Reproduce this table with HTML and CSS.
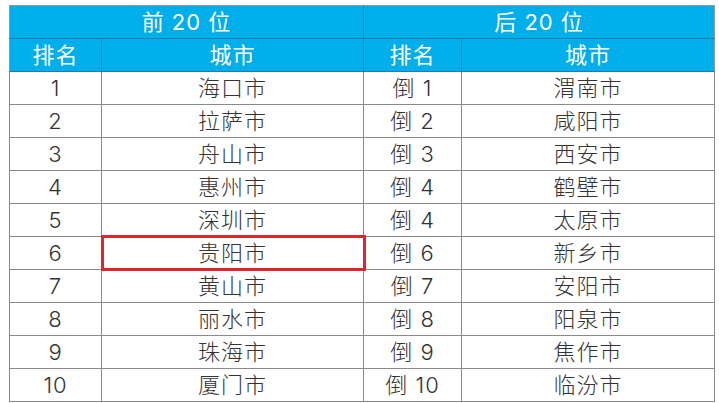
FILE: index.html
```html
<!DOCTYPE html>
<html lang="zh">
<head>
<meta charset="utf-8">
<title>城市排名</title>
<link rel="stylesheet" href="styles.css">
</head>
<body>
<table class="rank">
  <colgroup>
    <col class="c1"><col class="c2"><col class="c3"><col class="c4">
  </colgroup>
  <thead>
    <tr class="h1"><th colspan="2">前 20 位</th><th colspan="2">后 20 位</th></tr>
    <tr class="h2"><th>排名</th><th>城市</th><th>排名</th><th>城市</th></tr>
  </thead>
  <tbody>
    <tr><td>1</td><td>海口市</td><td>倒 1</td><td>渭南市</td></tr>
    <tr><td>2</td><td>拉萨市</td><td>倒 2</td><td>咸阳市</td></tr>
    <tr><td>3</td><td>舟山市</td><td>倒 3</td><td>西安市</td></tr>
    <tr><td>4</td><td>惠州市</td><td>倒 4</td><td>鹤壁市</td></tr>
    <tr><td>5</td><td>深圳市</td><td>倒 4</td><td>太原市</td></tr>
    <tr><td>6</td><td class="hl">贵阳市</td><td>倒 6</td><td>新乡市</td></tr>
    <tr><td>7</td><td>黄山市</td><td>倒 7</td><td>安阳市</td></tr>
    <tr><td>8</td><td>丽水市</td><td>倒 8</td><td>阳泉市</td></tr>
    <tr><td>9</td><td>珠海市</td><td>倒 9</td><td>焦作市</td></tr>
    <tr><td>10</td><td>厦门市</td><td>倒 10</td><td>临汾市</td></tr>
  </tbody>
</table>
</body>
</html>
```

FILE: styles.css
```css
html, body {
  margin: 0;
  padding: 0;
  background: #ffffff;
}
body {
  padding: 5px 0 0 9px;
  font-family: Inter, "Noto Sans CJK SC", "Liberation Sans", sans-serif;
}
.rank {
  border-collapse: collapse;
  table-layout: fixed;
  width: 705px;
  color: #333333;
  font-size: 22px;
}
.c1 { width: 92px; }
.c2 { width: 262px; }
.c3 { width: 98px; }
.c4 { width: 253px; }
.rank tr { height: 33px; }
.rank th,
.rank td {
  padding: 0;
  text-align: center;
  vertical-align: middle;
  line-height: 32px;
  border: 1px solid #8a8a8a;
  font-weight: 300;
  letter-spacing: 1px;
}
.rank thead th {
  background: #00aeea;
  color: #ffffff;
  border-color: #2a78b0;
  font-weight: normal;
}
.rank .h1 th { border-top-color: #8a9aa8; }
.rank thead th:first-child { border-left-color: #8a9aa8; }
.rank thead th:last-child { border-right-color: #8a9aa8; }
.rank td.hl {
  position: relative;
}
.rank td.hl::after {
  content: "";
  position: absolute;
  left: -1px;
  top: -2px;
  right: -3px;
  bottom: -2px;
  border: 3px solid #e0262b;
}
```
